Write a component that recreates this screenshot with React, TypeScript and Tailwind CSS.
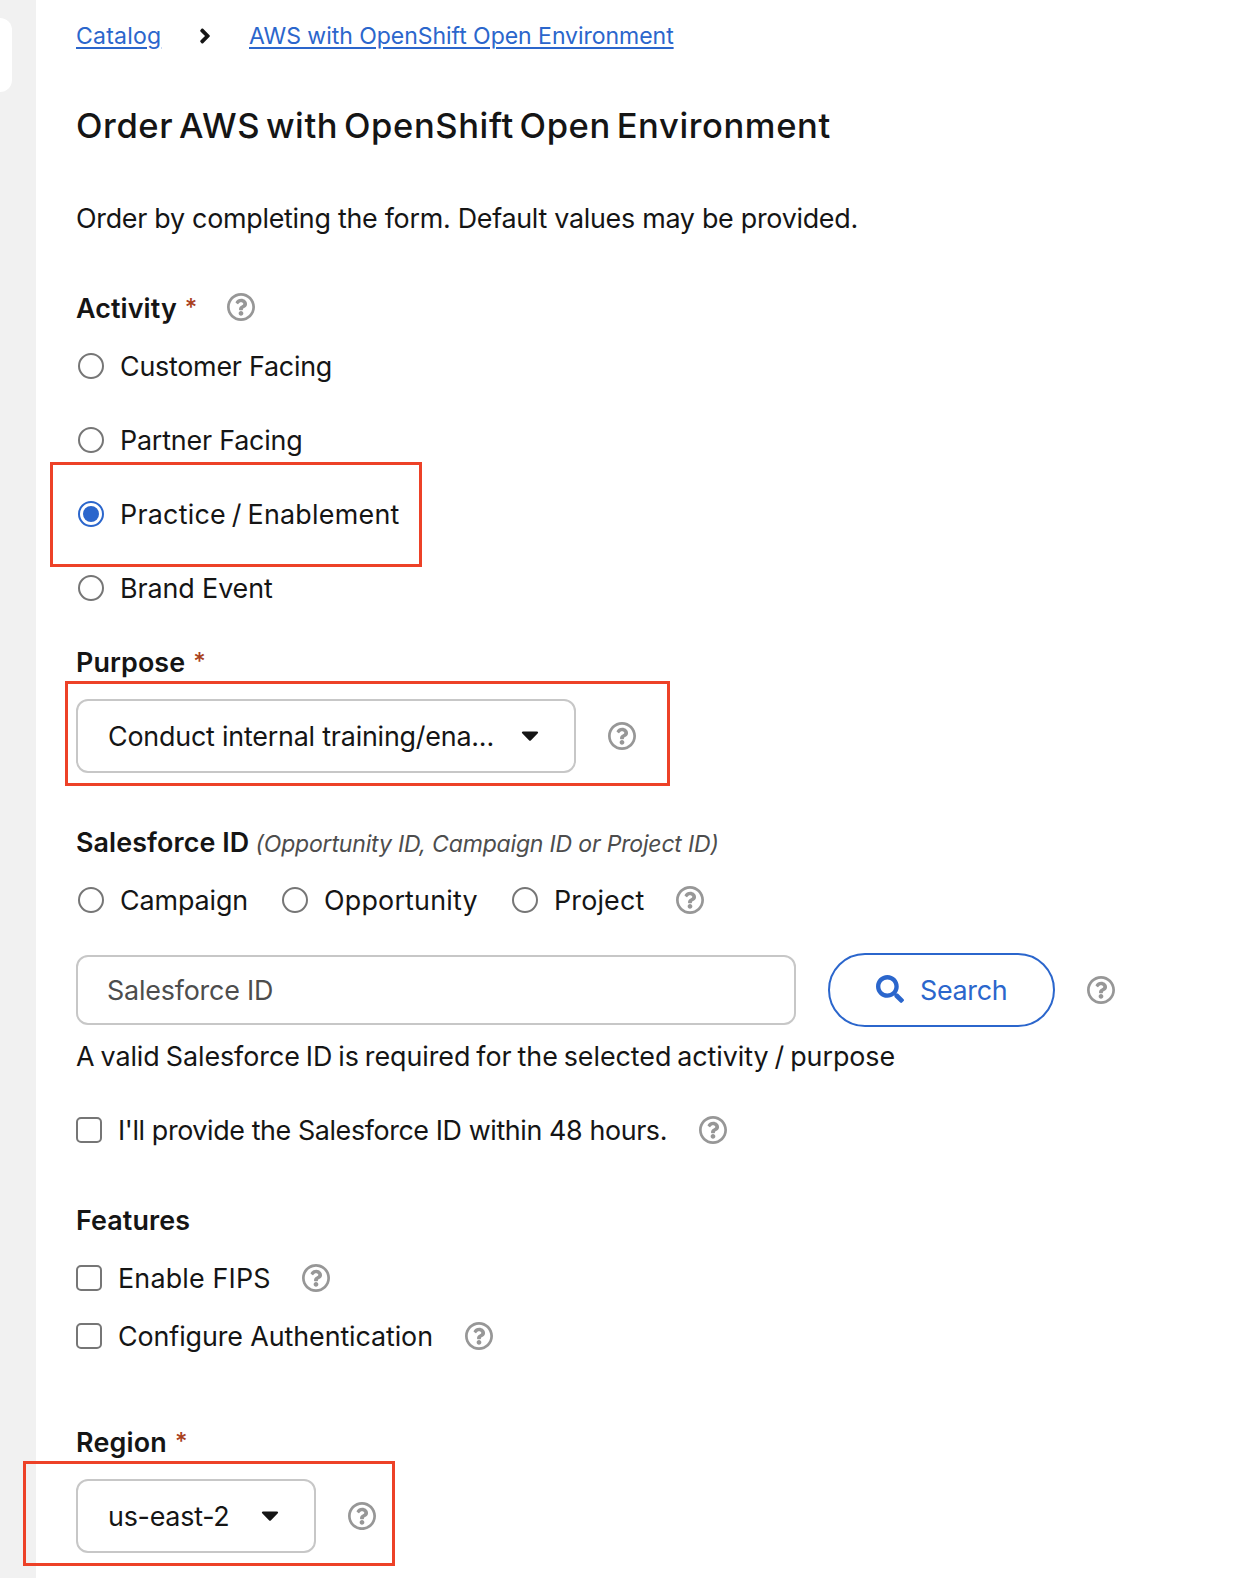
import React from "react";
import { FaAngleRight, FaCaretDown, FaSearch } from "react-icons/fa";

function Help({ className = "" }: { className?: string }) {
  return (
    <svg viewBox="8 8 496 496" className={`size-7 shrink-0 fill-[#979797] ${className}`} aria-label="Help">
      <path d="M256 8C119.043 8 8 119.083 8 256c0 136.997 111.043 248 248 248s248-111.003 248-248C504 119.083 392.957 8 256 8zm0 448c-110.532 0-200-89.431-200-200 0-110.495 89.472-200 200-200 110.491 0 200 89.471 200 200 0 110.53-89.431 200-200 200zm107.244-255.2c0 67.052-72.421 68.084-72.421 92.863V300c0 6.627-5.373 12-12 12h-45.647c-6.627 0-12-5.373-12-12v-8.659c0-35.745 27.1-50.034 47.579-61.516 17.561-9.845 28.324-16.541 28.324-29.579 0-17.246-21.999-28.693-39.784-28.693-23.189 0-33.894 10.977-48.942 29.969-4.057 5.12-11.46 6.071-16.666 2.124l-27.824-21.098c-5.107-3.872-6.251-11.066-2.644-16.363C184.846 131.491 214.94 112 261.794 112c49.071 0 101.45 38.304 101.45 88.8zM298 368c0 23.159-18.841 42-42 42s-42-18.841-42-42 18.841-42 42-42 42 18.841 42 42z" />
    </svg>
  );
}

function Radio({ checked = false }: { checked?: boolean }) {
  return checked ? (
    <span className="ml-[2px] flex size-[26px] shrink-0 items-center justify-center rounded-full border-2 border-[#2b66cc]">
      <span className="size-4 rounded-full bg-[#2b66cc]" />
    </span>
  ) : (
    <span className="ml-[2px] size-[26px] shrink-0 rounded-full border-2 border-[#767676]" />
  );
}

function Check() {
  return <span className="mr-4 size-[26px] shrink-0 rounded-[5px] border-2 border-[#767676]" />;
}

function Star() {
  return <span className="ml-2 text-[24px] font-medium text-[#a9411d]">*</span>;
}

const row = "flex h-[42px] items-center";

export default function App() {
  return (
    <div className="flex h-[1578px] w-[1234px] overflow-hidden bg-white font-['Inter',sans-serif] text-[26.88px] leading-[42px] whitespace-nowrap text-[#151515]">
      <aside className="w-9 shrink-0 bg-[#f1f1f1] pt-[18px]">
        <div className="h-[74px] w-3 rounded-r-xl bg-white" />
      </aside>

      <main className="flex flex-1 flex-col pt-[15px] pl-10">
        <nav className="flex h-[42px] items-center text-[23.04px] text-[#2b66cc]">
          <a className="w-[84px] tracking-[0.2px] underline decoration-2 underline-offset-[3px]">Catalog</a>
          <FaAngleRight className="mr-[32px] ml-[33px] size-6 text-[#151515]" />
          <a className="tracking-[-0.05px] underline decoration-2 underline-offset-[3px]">AWS with OpenShift Open Environment</a>
        </nav>

        <h1 className="mt-[45px] h-12 text-[34.56px] leading-[48px] font-medium tracking-[0.6px] [word-spacing:-4px]">
          Order AWS with OpenShift Open Environment
        </h1>
        <p className="mt-[47px] tracking-[-0.28px]">Order by completing the form. Default values may be provided.</p>

        <div className={`${row} mt-[48px] font-semibold`}>
          <span className="tracking-[0.1px]">Activity</span>
          <Star />
          <Help className="mb-[2px] ml-[30px]" />
        </div>
        <div className="mt-4 flex flex-col gap-8">
          <div className={row}>
            <Radio />
            <span className="ml-4 tracking-[-0.25px]">Customer Facing</span>
          </div>
          <div className={row}>
            <Radio />
            <span className="ml-4 tracking-[-0.2px]">Partner Facing</span>
          </div>
          <div className={`${row} relative`}>
            <Radio checked />
            <span className="ml-4 tracking-[0.24px] [word-spacing:-2px]">Practice / Enablement</span>
            <div className="absolute top-[-31px] left-[-26px] h-[105px] w-[372px] border-3 border-[#ed4127]" />
          </div>
          <div className={row}>
            <Radio />
            <span className="ml-4 tracking-[-0.1px]">Brand Event</span>
          </div>
        </div>

        <div className={`${row} mt-8 font-semibold`}>
          <span className="tracking-[0.1px]">Purpose</span>
          <Star />
        </div>
        <div className="relative mt-4 flex h-[74px] items-center">
          <div className="flex h-full w-[500px] items-center rounded-xl border-2 border-[#c7c7c7] pl-[30px]">
            <span className="w-[408px] tracking-[-0.21px]">Conduct internal training/ena...</span>
            <FaCaretDown className="mb-[2px] size-7" />
          </div>
          <Help className="ml-8" />
          <div className="absolute top-[-18px] left-[-11px] h-[105px] w-[605px] border-3 border-[#ed4127]" />
        </div>

        <div className="mt-[48px] flex h-[42px] items-baseline">
          <span className="w-[179.5px] font-semibold tracking-[0.1px]">Salesforce ID</span>
          <i className="text-[23.04px] tracking-[-0.19px] text-[#4d4d4d]">(Opportunity ID, Campaign ID or Project ID)</i>
        </div>
        <div className={`${row} mt-4`}>
          <Radio />
          <span className="ml-4 w-[160px] tracking-[-0.1px]">Campaign</span>
          <Radio />
          <span className="ml-4 w-[186px] tracking-[0.2px]">Opportunity</span>
          <Radio />
          <span className="ml-4 w-[122px] tracking-[0.15px]">Project</span>
          <Help />
        </div>

        <div className="mt-8 flex h-[74px] items-center">
          <div className="flex h-[70px] w-[720px] items-center rounded-xl border-2 border-[#c7c7c7] pl-[29px] tracking-[-0.2px] text-[#4d4d4d]">
            Salesforce ID
          </div>
          <button className="ml-8 flex h-[74px] w-[227px] items-center rounded-full border-2 border-[#2b66cc] pl-[46px] text-[#2b66cc]">
            <FaSearch className="mb-[2px] size-7" />
            <span className="ml-4 tracking-[-0.3px]">Search</span>
          </button>
          <Help className="ml-8" />
        </div>
        <p className="mt-2 tracking-[-0.06px] [word-spacing:-1.5px]">
          A valid Salesforce ID is required for the selected activity / purpose
        </p>

        <div className={`${row} mt-8`}>
          <Check />
          <span className="w-[581px] tracking-[-0.4px]">I'll provide the Salesforce ID within 48 hours.</span>
          <Help />
        </div>

        <div className={`${row} mt-[48px] font-semibold tracking-[0.1px]`}>Features</div>
        <div className={`${row} mt-4`}>
          <Check />
          <span className="w-[184px] tracking-[0.18px]">Enable FIPS</span>
          <Help />
        </div>
        <div className={`${row} mt-4`}>
          <Check />
          <span className="w-[347px] tracking-[-0.1px]">Configure Authentication</span>
          <Help />
        </div>

        <div className={`${row} mt-[64px] font-semibold`}>
          <span className="tracking-[0.2px]">Region</span>
          <Star />
        </div>
        <div className="relative mt-4 flex h-[74px] shrink-0 items-center">
          <div className="flex h-full w-[240px] items-center rounded-xl border-2 border-[#c7c7c7] pl-[30px]">
            <span className="w-[148px] tracking-[-0.25px]">us-east-2</span>
            <FaCaretDown className="mb-[2px] size-7" />
          </div>
          <Help className="ml-8" />
          <div className="absolute top-[-18px] left-[-53px] h-[105px] w-[372px] border-3 border-[#ed4127]" />
        </div>
      </main>
    </div>
  );
}
